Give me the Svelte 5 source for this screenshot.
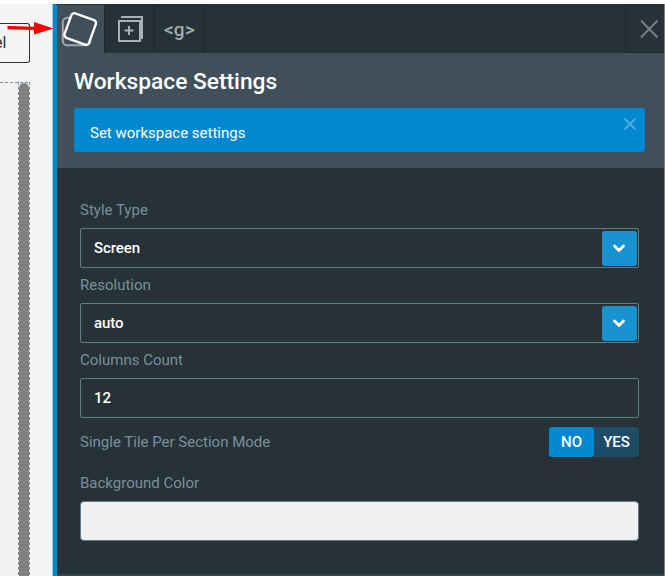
<script>
  const selects = [
    { label: 'Style Type', value: 'Screen' },
    { label: 'Resolution', value: 'auto' }
  ];
</script>

<div class="page">
  <div class="canvas">
    <div class="cut-button"><span>el</span></div>
    <div class="dashed"><div class="scroll"></div></div>
  </div>
  <section class="panel">
    <nav>
      <div class="tab active">
        <svg width="47" height="48" viewBox="57 5 47 48" fill="none">
          <rect x="62.8" y="17.8" width="27.5" height="27.5" rx="4.5" stroke="#9fa8ac" stroke-width="2" />
          <rect x="-13" y="-13" width="26" height="26" rx="3" transform="translate(80.2 29) rotate(20)" fill="#3f505a" stroke="#fff" stroke-width="2.4" />
        </svg>
      </div>
      <div class="tab second">
        <svg width="50" height="48" viewBox="105 5 50 48" fill="none" stroke="#a9afb2" stroke-width="2">
          <path d="M119 21h21v20h-21zM121 17h21v22M129 26v9M124.500 30.500h9" />
        </svg>
      </div>
      <div class="tab code">&lt;g&gt;</div>
      <div class="tab close">
        <svg width="38" height="48" viewBox="626 5 38 48" stroke="#748086" stroke-width="2"><path d="M641 20.500l16.500 17M657.500 20.500l-16.500 17" /></svg>
      </div>
    </nav>
    <header>
      <h1>Workspace Settings</h1>
      <div class="notice">
        <span>Set workspace settings</span>
        <svg width="12" height="12" viewBox="0 0 12 12" stroke="#4dabdf" stroke-width="2"><path d="M.7.7l10.600 10.600M11.300.7L.7 11.300" /></svg>
      </div>
    </header>
    <main>
      {#each selects as item}
        <div class="field">
          <div class="label">{item.label}</div>
          <div class="box">
            <span>{item.value}</span>
            <div class="arrow">
              <svg width="12" height="9" viewBox="0 0 12 9" fill="none" stroke="#fff" stroke-width="2.800" stroke-linecap="round" stroke-linejoin="round"><path d="M1.600 2L6 6.500 10.400 2" /></svg>
            </div>
          </div>
        </div>
      {/each}
      <div class="field">
        <div class="label">Columns Count</div>
        <div class="box"><span>12</span></div>
      </div>
      <div class="mode">
        <div class="label">Single Tile Per Section Mode</div>
        <div class="toggle"><span class="on">NO</span><span>YES</span></div>
      </div>
      <div class="label">Background Color</div>
      <div class="swatch"></div>
    </main>
  </section>
  <svg class="pointer" width="47" height="14" viewBox="0 0 47 14"><path d="M0.500 4L27 4.800V0L46.500 6.600 27 12.500V8L0.500 7.200z" fill="#f00" /></svg>
</div>

<style>
  :global(body) { background: #fcfcfc; overflow: hidden; }
  .page {
    position: relative; display: flex; box-sizing: border-box;
    width: 665px; height: 576px; padding-top: 4px; overflow: hidden;
    font-family: Roboto, "Liberation Sans", sans-serif; font-size: 15px; color: #fff;
    background: linear-gradient(#fcfcfc 4px, #808080 4px);
  }
  .canvas { width: 53px; flex: none; background: #f4f4f4; overflow: hidden; }
  .cut-button {
    box-sizing: border-box; width: 30px; height: 40px; margin-top: 19px;
    border: 1px solid #263238; border-left: 0; border-radius: 0 3px 3px 0;
    line-height: 38px; font-size: 16px; color: #263238;
  }
  .cut-button span { margin-left: -6px; }
  .dashed {
    display: flex; justify-content: flex-end; box-sizing: border-box;
    width: 30px; height: 500px; margin-top: 19px; padding: 1px 1px 0 0;
    background:
      repeating-linear-gradient(90deg, #78909c 0 3px, transparent 3px 5px) 0 0 / 100% 1px no-repeat,
      repeating-linear-gradient(#78909c 0 3px, transparent 3px 5px) 100% 0 / 1px 100% no-repeat,
      repeating-linear-gradient(#78909c 0 3px, transparent 3px 5px) 18px 0 / 1px 100% no-repeat,
      #f2f2f2;
  }
  .scroll { width: 10px; background: #808080; border-radius: 5px 5px 0 0; }
  .panel {
    box-sizing: border-box; width: 611px; flex: none; border-left: 4px solid #0288d1;
    box-shadow: -1px 0 #9dc9e5; background: #263238; display: flex; flex-direction: column;
  }
  nav { display: flex; height: 49px; box-sizing: border-box; padding-top: 1px; flex: none; background: #263238; }
  .tab { box-sizing: border-box; height: 48px; border: 1px solid #1e282d; border-width: 1px 1px 0 0; }
  .tab svg { display: block; margin-top: -1px; }
  .active { width: 48px; background: #3f505a; border-top-color: #3f505a; }
  .second { width: 50px; }
  .code { width: 50px; line-height: 47px; text-align: center; font-size: 19px; font-weight: 500; letter-spacing: .3px; color: #a3aaad; }
  .close { width: 39px; margin-left: auto; border-width: 1px 0 1px 1px; }
  header { box-sizing: border-box; height: 115px; flex: none; padding: 15px 19px 0 17px; background: #3f505a; }
  h1 { margin: 0; height: 40px; font-size: 22.75px; line-height: 28px; font-weight: 500; }
  .notice {
    display: flex; justify-content: space-between; box-sizing: border-box; height: 44px;
    padding: 10px 9px 0 16px; border-radius: 3px; background: #0288d1; line-height: 30px;
  }
  main { flex: 1; padding: 30px 25px 0 23px; border-bottom: 2px solid #37474f; }
  .label { height: 30px; line-height: 24px; color: #78909c; }
  .field { height: 75px; }
  .box {
    display: flex; justify-content: space-between; align-items: center; box-sizing: border-box;
    height: 40px; padding: 0 1px 0 13px; border: 1px solid #607d8b; border-radius: 2px; font-weight: 500;
  }
  .box > span { letter-spacing: -.1px; }
  .arrow { display: flex; align-items: center; justify-content: center; box-sizing: border-box; width: 35px; height: 35px; margin-top: 1px; padding-right: 1px; border-radius: 3px; background: #1892d1; }
  .arrow svg { margin-bottom: 1px; }
  .mode { display: flex; justify-content: space-between; height: 48px; }
  .mode .label { margin-top: 7px; }
  .toggle { display: flex; height: 30px; margin-top: 4px; border-radius: 3px; background: #1e4b66; line-height: 30px; font-weight: 500; }
  .toggle span { width: 45px; text-align: center; }
  .toggle .on { border-radius: 3px; background: #0288d1; }
  .swatch { box-sizing: border-box; height: 40px; border: 1px solid #607d8b; border-radius: 4px; background: #f0f0f0; }
  .pointer { position: absolute; left: 7px; top: 22px; }
</style>
